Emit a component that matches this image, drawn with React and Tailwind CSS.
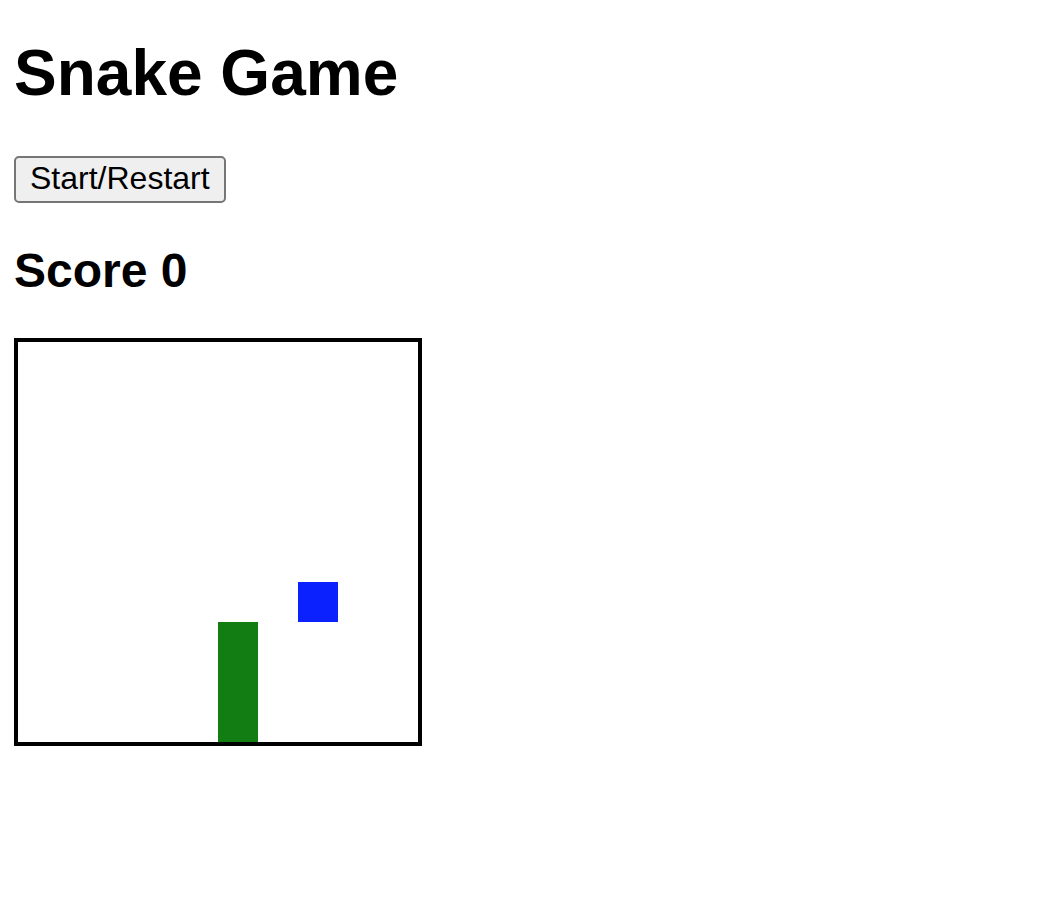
import { useState } from 'react';

// 10x10 board, 40px cells
const START_SNAKE = [
  { x: 5, y: 7 },
  { x: 5, y: 8 },
  { x: 5, y: 9 },
];
const START_FOOD = { x: 7, y: 6 };

const colClass = ['col-start-1', 'col-start-2', 'col-start-3', 'col-start-4', 'col-start-5', 'col-start-6', 'col-start-7', 'col-start-8', 'col-start-9', 'col-start-10'];
const rowClass = ['row-start-1', 'row-start-2', 'row-start-3', 'row-start-4', 'row-start-5', 'row-start-6', 'row-start-7', 'row-start-8', 'row-start-9', 'row-start-10'];

export default function App() {
  const [snake, setSnake] = useState(START_SNAKE);
  const [food, setFood] = useState(START_FOOD);
  const [score, setScore] = useState(0);

  const restart = () => {
    setSnake(START_SNAKE);
    setFood(START_FOOD);
    setScore(0);
  };

  return (
    <div className="min-h-screen bg-white pt-[36px] pl-[14px] text-black font-['Liberation_Sans',Arial,sans-serif]">
      <h1 className="text-[64px] leading-[74px] font-bold">Snake Game</h1>

      <button
        onClick={restart}
        className="mt-[46px] h-[47px] px-[14px] pb-[2px] flex items-center bg-[#efefef] border-2 border-[#767676] rounded-[5px] text-[32px] leading-[37px]"
      >
        Start/Restart
      </button>

      <h2 className="mt-[40px] text-[48px] leading-[55px] font-bold">Score {score}</h2>

      {/* Board */}
      <div className="mt-[40px] w-[408px] h-[408px] border-4 border-black grid grid-cols-10 grid-rows-10">
        {snake.map((s, i) => (
          <div key={i} className={`${colClass[s.x]} ${rowClass[s.y]} bg-[#117d12]`} />
        ))}
        <div className={`${colClass[food.x]} ${rowClass[food.y]} bg-[#0b22fe]`} />
      </div>
    </div>
  );
}
